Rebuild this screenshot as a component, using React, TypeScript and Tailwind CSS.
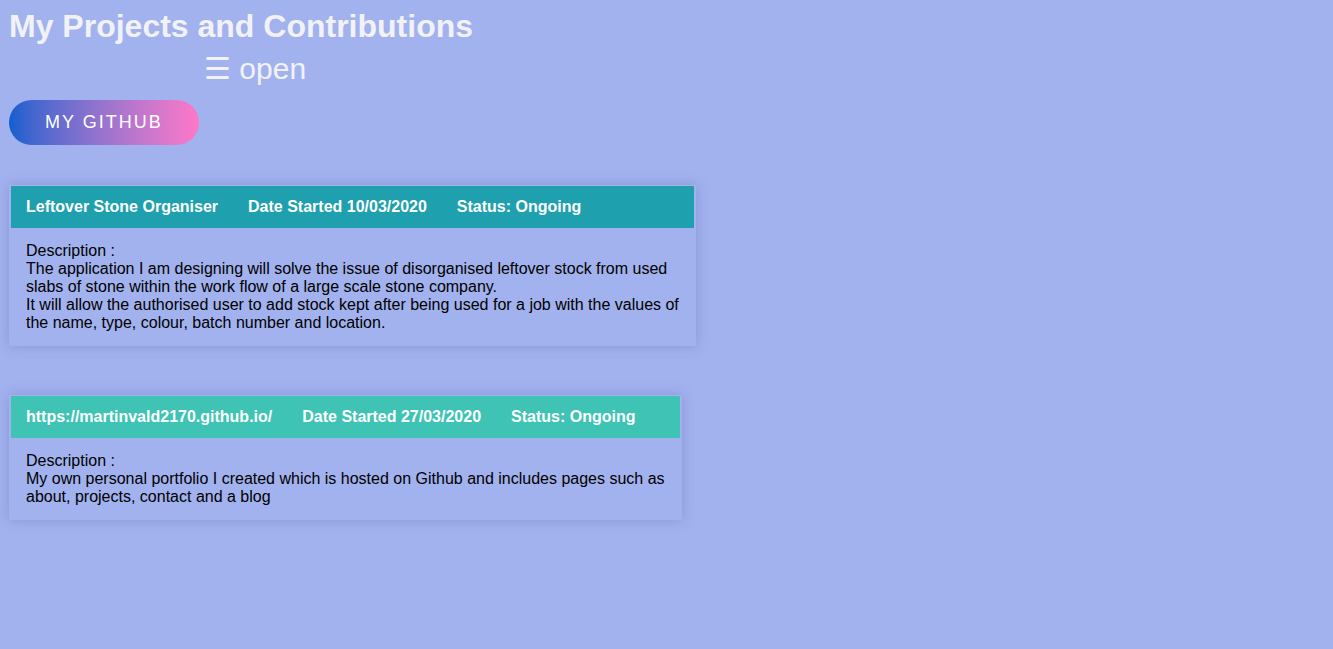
type Project = {
  name: string;
  started: string;
  status: string;
  headerClass: string;
  widthClass: string;
  lines: string[];
};

const projects: Project[] = [
  {
    name: "Leftover Stone Organiser",
    started: "10/03/2020",
    status: "Ongoing",
    headerClass: "bg-[#1ea0ae]",
    widthClass: "w-[687px]",
    lines: [
      "The application I am designing will solve the issue of disorganised leftover stock from used slabs of stone within the work flow of a large scale stone company.",
      "It will allow the authorised user to add stock kept after being used for a job with the values of the name, type, colour, batch number and location.",
    ],
  },
  {
    name: "https://martinvald2170.github.io/",
    started: "27/03/2020",
    status: "Ongoing",
    headerClass: "bg-[#3ec3b4]",
    widthClass: "w-[673px]",
    lines: [
      "My own personal portfolio I created which is hosted on Github and includes pages such as about, projects, contact and a blog",
    ],
  },
];

function ProjectCard({ project }: { project: Project }) {
  return (
    <div
      className={`${project.widthClass} px-[2px] pt-px shadow-[0_0_12px_rgba(60,70,140,0.25)]`}
    >
      <div
        className={`${project.headerClass} flex py-3 text-base leading-[18px] font-bold text-white`}
      >
        <span className="px-[15px]">{project.name}</span>
        <span className="px-[15px]">Date Started {project.started}</span>
        <span className="px-[15px]">Status: {project.status}</span>
      </div>
      <div className="pl-[15px] pr-[10px] pt-[14px] pb-[14px] text-base leading-[18px] text-black">
        <div>Description :</div>
        {project.lines.map((line) => (
          <div key={line}>{line}</div>
        ))}
      </div>
    </div>
  );
}

export default function App() {
  return (
    <div className="min-h-screen bg-[#a2b2ee] font-['Liberation_Sans',Arial,sans-serif] pt-2 pl-[9px]">
      <h1 className="text-[32px] leading-[36px] font-bold text-[#f2f2f6]">
        My Projects and Contributions
      </h1>
      <div className="mt-[8px] pl-[195px] text-[30px] leading-[34px] text-[#f2f2f6]">
        ☰ open
      </div>
      <a
        href="#"
        className="mt-[14px] inline-block rounded-full bg-gradient-to-r from-[#0a5fcf] to-[#ff77c8] px-9 py-3 text-lg leading-[21px] tracking-[2px] text-white"
      >
        MY GITHUB
      </a>
      <div className="mt-10 flex flex-col gap-[49px]">
        {projects.map((p) => (
          <ProjectCard key={p.name} project={p} />
        ))}
      </div>
    </div>
  );
}
